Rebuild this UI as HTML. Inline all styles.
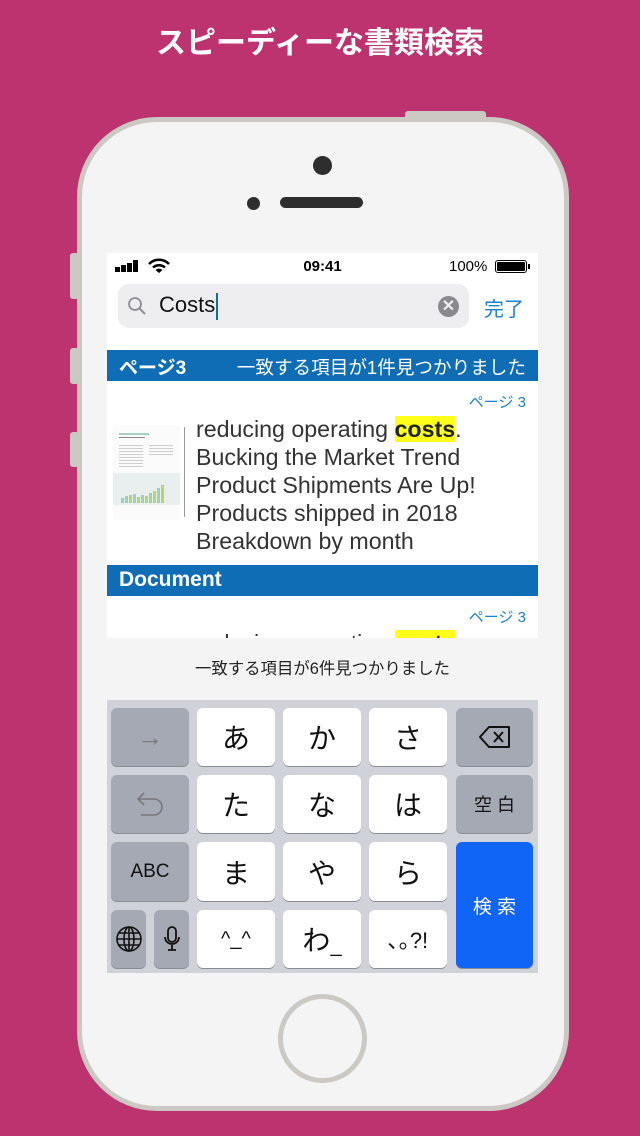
<!DOCTYPE html>
<html><head><meta charset="utf-8"><style>
*{margin:0;padding:0;box-sizing:border-box}
body{width:640px;height:1136px;background:#bc336f;position:relative;overflow:hidden;font-family:"Liberation Sans","Noto Sans CJK JP",sans-serif}
.abs{position:absolute}
.title{left:0;width:640px;top:18px;text-align:center;color:#fff;font-size:30px;font-weight:bold}
.phone{left:77px;top:117px;width:492px;height:994px;background:#f4f4f4;border:5px solid #ccc9c4;border-radius:80px}
.btn{background:#ccc9c4;border-radius:3px}
.screen{left:107px;top:253px;width:431px;height:720px;background:#fff;overflow:hidden}
.key{position:absolute;background:#fff;border-radius:6px;box-shadow:0 1px 0 #888c94;display:flex;align-items:center;justify-content:center;font-size:28px;color:#111}
.g{background:#a4a9b4}
.hl{background:#ffff1a;font-weight:bold;color:#222}
.lines div{height:28px;line-height:28px;white-space:nowrap}
</style></head><body>
<div class="abs title">スピーディーな書類検索</div>
<div class="abs btn" style="left:405px;top:111px;width:81px;height:10px"></div>
<div class="abs btn" style="left:70px;top:253px;width:9px;height:46px"></div>
<div class="abs btn" style="left:70px;top:348px;width:9px;height:36px"></div>
<div class="abs btn" style="left:70px;top:432px;width:9px;height:35px"></div>
<div class="abs phone"></div>
<div class="abs" style="left:313px;top:156px;width:19px;height:19px;border-radius:50%;background:#2e2e2e"></div>
<div class="abs" style="left:247px;top:197px;width:13px;height:13px;border-radius:50%;background:#2e2e2e"></div>
<div class="abs" style="left:280px;top:197px;width:83px;height:11px;border-radius:6px;background:#2e2e2e"></div>
<div class="abs" style="left:278px;top:994px;width:89px;height:89px;border-radius:50%;border:5px solid #ccc9c4"></div>

<div class="abs screen">
  <div class="abs" style="left:8px;top:7px;display:flex;align-items:flex-end;gap:1.5px">
    <div style="width:4.5px;height:5px;background:#000"></div><div style="width:4.5px;height:7px;background:#000"></div><div style="width:4.5px;height:9px;background:#000"></div><div style="width:4.5px;height:12px;background:#000"></div>
  </div>
  <svg class="abs" style="left:41px;top:5px" width="22" height="16" viewBox="0 0 22 16"><path d="M1 6 A14 14 0 0 1 21 6" stroke="#000" stroke-width="2.5" fill="none"/><path d="M5 9.5 A9 9 0 0 1 17 9.5" stroke="#000" stroke-width="2.5" fill="none"/><path d="M11 15 L7.5 12 A5 5 0 0 1 14.5 12 Z" fill="#000"/></svg>
  <div class="abs" style="left:0;width:431px;top:5px;text-align:center;font-size:15px;font-weight:bold">09:41</div>
  <div class="abs" style="left:342px;top:5px;font-size:15px">100%</div>
  <div class="abs" style="left:388px;top:7px;width:32px;height:13px;border:1.5px solid #000;border-radius:3px;padding:1px"><div style="background:#000;width:100%;height:100%;border-radius:1px"></div></div>
  <div class="abs" style="left:421px;top:11px;width:2px;height:5px;background:#000"></div>
  <div class="abs" style="left:11px;top:31px;width:351px;height:44px;background:#eeeef0;border-radius:11px"></div>
  <svg class="abs" style="left:20px;top:43px" width="20" height="20" viewBox="0 0 20 20"><circle cx="8" cy="8" r="6" stroke="#8e8e93" stroke-width="1.8" fill="none"/><path d="M12.5 12.5 L18 18" stroke="#8e8e93" stroke-width="2"/></svg>
  <div class="abs" style="left:52px;top:39px;font-size:22px;color:#111">Costs</div>
  <div class="abs" style="left:109px;top:40px;width:2px;height:27px;background:#0f6db5"></div>
  <div class="abs" style="left:331px;top:43px;width:21px;height:21px;border-radius:50%;background:#8a8a8e;color:#eee;font-size:16px;font-weight:bold;text-align:center;line-height:21px">✕</div>
  <div class="abs" style="left:377px;top:40px;font-size:20px;color:#1a82d0">完了</div>
  <div class="abs" style="left:0;top:97px;width:431px;height:31px;background:#0f6db5;color:#fff">
    <span class="abs" style="left:12px;top:3px;font-size:19px;font-weight:bold">ページ3</span>
    <span class="abs" style="right:12px;top:3px;font-size:18.6px;white-space:nowrap">一致する項目が1件見つかりました</span>
  </div>
  <div class="abs" style="right:12px;top:138px;font-size:15px;color:#1a82d0">ページ 3</div>
  <div class="abs" style="left:6px;top:172px;width:67px;height:95px;background:#fbfbfb">
    <div class="abs" style="left:6px;top:8px;width:30px;height:2px;background:#a9cfc3"></div>
    <div class="abs" style="left:6px;top:12px;width:26px;height:1px;background:#888"></div>
    <div class="abs" style="left:6px;top:20px;width:24px;height:24px;background:repeating-linear-gradient(#ccc 0 1px,transparent 1px 3px)"></div>
    <div class="abs" style="left:36px;top:20px;width:24px;height:12px;background:repeating-linear-gradient(#ccc 0 1px,transparent 1px 3px)"></div>
    <div class="abs" style="left:0;top:48px;width:67px;height:32px;background:#e8efee"></div>
    <svg class="abs" style="left:6px;top:57px" width="56" height="22"><g fill="#9ccfc0"><rect x="2" y="16" width="3" height="5"/><rect x="6" y="14" width="3" height="7"/><rect x="14" y="12" width="3" height="9"/><rect x="22" y="13" width="3" height="8"/><rect x="30" y="11" width="3" height="10"/><rect x="38" y="6" width="3" height="15"/></g><g fill="#b8d46a"><rect x="10" y="13" width="3" height="8"/><rect x="18" y="15" width="3" height="6"/><rect x="26" y="14" width="3" height="7"/><rect x="34" y="9" width="3" height="12"/><rect x="42" y="3" width="3" height="18"/></g></svg>
    <div class="abs" style="left:71px;top:2px;width:1px;height:90px;background:#999"></div>
  </div>
  <div class="abs lines" style="left:89px;top:162px;font-size:23.2px;color:#333">
    <div>reducing operating <span class="hl">costs</span>.</div>
    <div>Bucking the Market Trend</div>
    <div>Product Shipments Are Up!</div>
    <div>Products shipped in 2018</div>
    <div>Breakdown by month</div>
  </div>
  <div class="abs" style="left:0;top:312px;width:431px;height:31px;background:#0f6db5;color:#fff">
    <span class="abs" style="left:12px;top:3px;font-size:21px;font-weight:bold">Document</span>
  </div>
  <div class="abs" style="right:12px;top:353px;font-size:15px;color:#1a82d0">ページ 3</div>
  <div class="abs" style="left:89px;top:376px;font-size:23.2px;color:#333;line-height:28px;white-space:nowrap">reducing operating <span class="hl">costs</span>.</div>
  <div class="abs" style="left:0;top:385px;width:431px;height:62px;background:#f4f4f4;text-align:center;font-size:16.4px;line-height:62px;color:#222">一致する項目が6件見つかりました</div>
  <div class="abs" style="left:0;top:447px;width:431px;height:273px;background:#cfd2d9">
    <div class="key g" style="left:4px;top:8px;width:78px;height:58px;font-size:26px;color:#777">→</div>
    <div class="key" style="left:90px;top:8px;width:78px;height:58px">あ</div>
    <div class="key" style="left:176px;top:8px;width:78px;height:58px">か</div>
    <div class="key" style="left:262px;top:8px;width:78px;height:58px">さ</div>
    <div class="key g" style="left:349px;top:8px;width:77px;height:58px"><svg width="34" height="24" viewBox="0 0 34 24"><path d="M11 2 H31 V22 H11 L2 12 Z" stroke="#111" stroke-width="2" fill="none" stroke-linejoin="round"/><path d="M16 7 L25 17 M25 7 L16 17" stroke="#111" stroke-width="2"/></svg></div>
    <div class="key g" style="left:4px;top:75px;width:78px;height:58px"><svg width="30" height="28" viewBox="0 0 30 28"><path d="M9 3 L3 9 L9 15 M3 9 H19 A7 7 0 0 1 19 25 H6" stroke="#777" stroke-width="1.6" fill="none"/></svg></div>
    <div class="key" style="left:90px;top:75px;width:78px;height:58px">た</div>
    <div class="key" style="left:176px;top:75px;width:78px;height:58px">な</div>
    <div class="key" style="left:262px;top:75px;width:78px;height:58px">は</div>
    <div class="key g" style="left:349px;top:75px;width:77px;height:58px;font-size:18px">空 白</div>
    <div class="key g" style="left:4px;top:142px;width:78px;height:59px;font-size:19px">ABC</div>
    <div class="key" style="left:90px;top:142px;width:78px;height:59px">ま</div>
    <div class="key" style="left:176px;top:142px;width:78px;height:59px">や</div>
    <div class="key" style="left:262px;top:142px;width:78px;height:59px">ら</div>
    <div class="key" style="left:349px;top:142px;width:77px;height:126px;background:#1064f6;color:#fff;font-size:19px">検 索</div>
    <div class="key g" style="left:4px;top:210px;width:35px;height:58px"><svg width="28" height="28" viewBox="0 0 28 28" fill="none" stroke="#111" stroke-width="1.6"><circle cx="14" cy="14" r="12"/><ellipse cx="14" cy="14" rx="5" ry="12"/><path d="M2 14 H26 M4 8 H24 M4 20 H24 M14 2 V26"/></svg></div>
    <div class="key g" style="left:47px;top:210px;width:35px;height:58px"><svg width="16" height="28" viewBox="0 0 16 28" fill="none" stroke="#111" stroke-width="1.8"><rect x="4" y="2" width="8" height="15" rx="4"/><path d="M1 12 A7 7 0 0 0 15 12 M8 20 V25 M4 25 H12"/></svg></div>
    <div class="key" style="left:90px;top:210px;width:78px;height:58px;font-size:20px">^_^</div>
    <div class="key" style="left:176px;top:210px;width:78px;height:58px">わ<span style="font-size:20px;margin-top:14px">_</span></div>
    <div class="key" style="left:262px;top:210px;width:78px;height:58px;font-size:22px">､｡?!</div>
  </div>
</div>
</body></html>
